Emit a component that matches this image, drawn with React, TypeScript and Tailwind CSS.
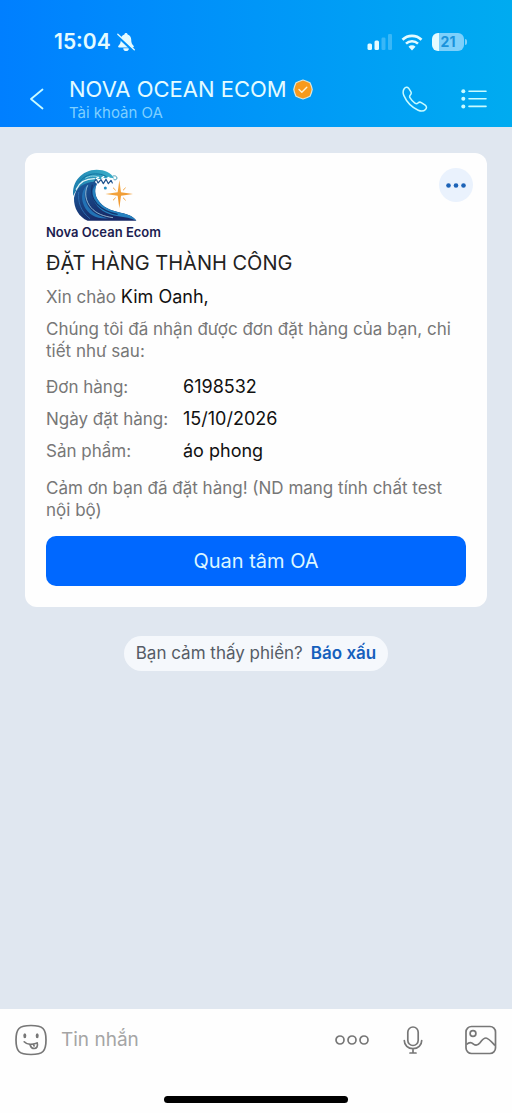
import { ReactNode } from "react";

const orderRows = [
  { label: "Đơn hàng:", value: "6198532" },
  { label: "Ngày đặt hàng:", value: "15/10/2026" },
  { label: "Sản phẩm:", value: "áo phong" },
];

interface IconButtonProps {
  label: string;
  className?: string;
  children: ReactNode;
}

const IconButton = ({ label, className = "", children }: IconButtonProps) => (
  <button type="button" aria-label={label} className={`shrink-0 cursor-pointer ${className}`}>
    {children}
  </button>
);

const BellOffIcon = () => (
  <svg width="18" height="20" viewBox="0 0 18 20" fill="none" aria-hidden="true">
    <path
      d="M9 1c-.9 0-1.500.600-1.600 1.400C5 3.200 3.800 5.200 3.800 7.600c0 3.200-.7 4.500-2.300 6.200-.7.8-.3 1.700.6 1.700h13.800c.9 0 1.300-.9.600-1.700-1.600-1.700-2.300-3-2.300-6.200 0-2.400-1.200-4.400-3.600-5.200C10.500 1.600 9.900 1 9 1Z"
      fill="#e4fbff"
    />
    <path d="M6.300 16.300a2.800 2.800 0 0 0 5.600 0Z" fill="#e4fbff" />
    <path d="M0 3.400 16.500 19" stroke="#0090fb" strokeWidth="2.600" />
    <path d="M.8 2.200 17.300 17.700" stroke="#e4fbff" strokeWidth="1.300" strokeLinecap="round" />
  </svg>
);

const SignalIcon = () => (
  <svg width="26" height="18" viewBox="0 0 26 18" fill="#e4fbff" aria-hidden="true">
    <rect x="0.500" y="10.500" width="4.500" height="6.500" rx="1.500" />
    <rect x="7.500" y="7.500" width="4.500" height="9.500" rx="1.500" />
    <rect x="14.500" y="4.500" width="4" height="12.500" rx="1.300" opacity="0.25" />
    <rect x="21" y="1" width="4" height="16" rx="1.300" opacity="0.25" />
  </svg>
);

const WifiIcon = () => (
  <svg width="22" height="17" viewBox="0 0 22 17" fill="none" aria-hidden="true">
    <path d="M1.500 5.800a13.600 13.600 0 0 1 19 0" stroke="#e4fbff" strokeWidth="2.700" />
    <path d="M5 9.700a8.600 8.600 0 0 1 12 0" stroke="#e4fbff" strokeWidth="2.500" />
    <path d="M11 16.500 7.500 12.800a5 5 0 0 1 7 0Z" fill="#e4fbff" />
  </svg>
);

const VerifiedIcon = () => (
  <svg width="20" height="21" viewBox="0 0 20 21" fill="none" aria-label="Đã xác thực">
    <path
      d="M10 1l3.500 1.200 3.500 1.500 1.400 3.500.8 3.300-.8 3.300-1.400 3.500-3.500 1.500L10 20l-3.500-1.200L3 17.300l-1.400-3.500-.8-3.300.8-3.300L3 3.700l3.500-1.500Z"
      fill="#f89a1c"
      stroke="#d9e6dc"
      strokeWidth="1.200"
      strokeLinejoin="round"
    />
    <path d="m6 10.500 2.800 2.700 5-5" stroke="#fff0cf" strokeWidth="1.400" strokeLinecap="round" strokeLinejoin="round" />
  </svg>
);

const PhoneIcon = () => (
  <svg width="26" height="26" viewBox="0 0 26 26" fill="none" stroke="#c8fbff" strokeWidth="1.500" strokeLinejoin="round" aria-hidden="true">
    <path d="M2.200 2.700C3.500 1 5.400.7 6.600 2.200l2.200 3.500c.8 1.300.5 2.300-.5 3.300-.9.9-.9 1.800-.2 2.900 1.100 1.800 2.900 3.900 4.800 5.200 1.200.8 2.200.8 3.100-.1 1-1 2-1.200 3.300-.4l3.900 2.600c1.500 1.100 1.700 2.800.3 4.200-1.800 1.900-4.700 2-7.300.8C9.900 21.300 4.700 16 1.900 9.600.8 7 .8 4.700 2.200 2.700Z" />
  </svg>
);

const ListIcon = () => (
  <svg width="26" height="20" viewBox="0 0 26 20" aria-hidden="true">
    <g fill="#c8fbff">
      <circle cx="2.300" cy="2.200" r="2" />
      <circle cx="2.300" cy="9.800" r="2" />
      <circle cx="2.300" cy="17.400" r="2" />
    </g>
    <path d="M8 2.200h17M8 9.800h17M8 17.400h17" stroke="#c8fbff" strokeWidth="1.600" strokeLinecap="round" />
  </svg>
);

const BrandMark = () => (
  <svg width="68" height="54" viewBox="34 20 204 162" fill="none" aria-hidden="true">
    <defs>
      <linearGradient id="deep" x1="60" y1="60" x2="120" y2="178" gradientUnits="userSpaceOnUse">
        <stop stopColor="#1c5d9f" />
        <stop offset="0.5" stopColor="#18407f" />
        <stop offset="1" stopColor="#182a68" />
      </linearGradient>
      <linearGradient id="crest" x1="50" y1="90" x2="150" y2="30" gradientUnits="userSpaceOnUse">
        <stop stopColor="#1d7fae" />
        <stop offset="1" stopColor="#38acc8" />
      </linearGradient>
      <linearGradient id="star" x1="140" y1="60" x2="205" y2="140" gradientUnits="userSpaceOnUse">
        <stop stopColor="#f6b352" />
        <stop offset="1" stopColor="#ee8f22" />
      </linearGradient>
    </defs>
    {/* wave body and tail */}
    <path d="M43 110c4-28 26-52 56-50 6 1 10 4 13 8-8 14-7 32 3 48 14 22 38 32 68 38 21 4 37 10 47 24H84c-26-10-42-38-41-68Z" fill="url(#deep)" />
    <path d="M112 68c-8 14-7 32 3 48 14 22 38 32 68 38 21 4 37 10 47 24-16-8-34-10-54-13-36-5-62-22-74-48-8-20-5-38 10-49Z" fill="#2581bf" />
    <path d="M88 68c-16 14-18 44-2 68 14 20 36 30 62 35-36 3-62-10-75-38-11-26-6-52 15-65Z" fill="#2272b5" />
    <path d="M84 72c-11 22-6 48 10 67 16 18 38 26 66 30" stroke="#b9e2f0" strokeWidth="2.200" />
    <path d="M98 70c-6 22 0 42 14 58 16 17 38 27 62 31" stroke="#14356f" strokeWidth="3.500" />
    <path d="M57 92c-3 30 6 58 34 80" stroke="#2b6aae" strokeWidth="3" />
    {/* curling crest */}
    <path d="M41 104c-6-42 26-79 70-79 24 0 44 9 53 27-8-4-16-4-22 0-6-3-14-3-18 2-8-4-16-1-18 7-32 1-56 17-65 43Z" fill="url(#crest)" />
    <path d="M50 84c9-20 27-32 54-32" stroke="#e6f6f8" strokeWidth="4" strokeLinecap="round" />
    <path d="M60 62c12-18 32-26 56-24 10 1 18 4 24 8" stroke="#12729f" strokeWidth="3" strokeLinecap="round" />
    <path d="M78 50c12-7 28-8 40-2" stroke="#8fd3e2" strokeWidth="3" strokeLinecap="round" />
    <path d="M102 63l8-9 5 11 9-10 7 12 8-13 7 13 8-10 4 8" stroke="#1a4f8a" strokeWidth="3.500" strokeLinejoin="round" strokeLinecap="round" />
    <path d="M110 52l6-4M126 50l6-4M142 51l6-3" stroke="#fff" strokeWidth="4" strokeLinecap="round" />
    <circle cx="137" cy="80" r="4.500" fill="#258fc0" />
    <path d="M160 44c7-2 12 1 12 6s-5 7-9 5" stroke="#2a8eaa" strokeWidth="2.500" strokeLinecap="round" />
    {/* compass star */}
    <path d="M179 56l5 37 36 5-36 5-5 38-5-38-37-5 37-5Z" fill="url(#star)" />
    <path d="M161 80l6 6M197 80l-6 6M161 116l6-6M197 116l-6-6" stroke="#f1a13a" strokeWidth="3" strokeLinecap="round" />
  </svg>
);

const StickerIcon = () => (
  <svg width="32" height="32" viewBox="0 0 32 32" fill="none" stroke="#777" strokeWidth="1.700" aria-hidden="true">
    <path d="M16 1.500c5 0 9.500.5 12 3s3 6.500 3 11.500-.5 9-3 11.500-7 3-12 3-9.500-.5-12-3-3-6.500-3-11.500.5-9 3-11.500 7-3 12-3Z" />
    <ellipse cx="9.800" cy="11.800" rx="1.500" ry="2.500" fill="#777" stroke="none" />
    <ellipse cx="22.200" cy="11.800" rx="1.500" ry="2.500" fill="#777" stroke="none" />
    <path d="M9.200 17.800c2.300 2.600 7.600 3 13 1.200" strokeLinecap="round" />
    <path d="M22.200 19c1 3.200-.6 5.500-3 5.500-1.900 0-3.200-1-4-3.300M18.500 20.500l.6 1.400" strokeLinecap="round" />
  </svg>
);

const MoreIcon = () => (
  <svg width="36" height="12" viewBox="0 0 36 12" fill="none" stroke="#777" strokeWidth="1.700" aria-hidden="true">
    <circle cx="6" cy="6" r="4" />
    <circle cx="18" cy="6" r="4" />
    <circle cx="30" cy="6" r="4" />
  </svg>
);

const MicIcon = () => (
  <svg width="20" height="28" viewBox="0 0 20 28" fill="none" stroke="#777" strokeWidth="1.700" strokeLinecap="round" aria-hidden="true">
    <rect x="4.800" y="1" width="10.400" height="18.500" rx="5.200" />
    <path d="M1.300 14.500c0 4.800 3.700 8.200 8.700 8.200s8.700-3.400 8.700-8.200M10 22.700V27M7 27h6" />
  </svg>
);

const PhotoIcon = () => (
  <svg width="32" height="30" viewBox="0 0 32 30" fill="none" stroke="#777" strokeWidth="1.700" aria-hidden="true">
    <rect x="1" y="1.500" width="29.500" height="27" rx="5.500" />
    <circle cx="8" cy="8.500" r="2.900" />
    <path d="M1.500 19.500c2.500-2.500 5-2.400 7-.4 2.300 1.700 4.400 1.300 6.500-1.400 2-2.700 4-4.700 6-4.700 2.300 0 4.400 2.500 9 7.500" />
  </svg>
);

const ChatHeader = () => (
  <header className="bg-linear-to-r from-[#007fff] to-[#00abf0] pt-7 pb-1 text-[#e4fbff]">
    <div className="flex h-7 items-center pr-[45px] pl-[54px]">
      <span className="text-[21px] leading-7 font-semibold">15:04</span>
      <span className="ml-1.5">
        <BellOffIcon />
      </span>
      <div className="ml-auto flex items-center gap-2">
        <SignalIcon />
        <WifiIcon />
        <div className="ml-px flex items-center gap-px">
          <span className="flex h-[18px] w-8 items-center justify-center rounded-md bg-linear-to-r from-[#e4fbff] from-22% to-[#7dd0fb] to-22% text-sm leading-none font-bold text-[#1a93dc]">
            21
          </span>
          <span className="h-1.5 w-0.5 rounded-r-full bg-[#7dd0fb]" />
        </div>
      </div>
    </div>

    <div className="mt-[19px] flex items-center pr-[25px] pl-[29px]">
      <IconButton label="Quay lại">
        <svg width="15" height="22" viewBox="0 0 15 22" fill="none" aria-hidden="true">
          <path d="M13.500 1.500 2 11l11.500 9.500" stroke="#c8fbff" strokeWidth="1.800" strokeLinecap="round" strokeLinejoin="round" />
        </svg>
      </IconButton>
      <div className="ml-[25px] min-w-0 flex-1">
        <div className="flex items-center gap-1.5">
          <h1 className="truncate text-[22px] leading-7">NOVA OCEAN ECOM</h1>
          <VerifiedIcon />
        </div>
        <p className="text-[15px] leading-5 text-[#7fd0ff]">Tài khoản OA</p>
      </div>
      <IconButton label="Gọi điện">
        <PhoneIcon />
      </IconButton>
      <IconButton label="Tùy chọn" className="ml-[33px]">
        <ListIcon />
      </IconButton>
    </div>
  </header>
);

const OrderCard = () => (
  <article className="rounded-xl bg-[#fefefe] pt-[15px] pb-[21px]">
    <div className="flex items-start justify-between pr-3.5 pl-[21px]">
      <div className="flex flex-col items-center">
        <div className="pl-1">
          <BrandMark />
        </div>
        <p className="mt-0.5 text-[13px] leading-4 font-semibold text-[#1c1d50]">Nova Ocean Ecom</p>
      </div>
      <IconButton label="Thêm" className="flex size-[34px] items-center justify-center rounded-full bg-[#eaf2fd]">
        <svg width="20" height="5" viewBox="0 0 20 5" fill="#1c63b7" aria-hidden="true">
          <circle cx="2.500" cy="2.500" r="2.300" />
          <circle cx="10" cy="2.500" r="2.300" />
          <circle cx="17.500" cy="2.500" r="2.300" />
        </svg>
      </IconButton>
    </div>

    <div className="px-[21px] text-[17px] leading-[22px] text-[#777]">
      <h2 className="mt-2.5 text-xl leading-[26px] text-[#222]">ĐẶT HÀNG THÀNH CÔNG</h2>
      <p className="mt-2.5">
        Xin chào <span className="text-lg leading-[22px] text-[#111]">Kim Oanh,</span>
      </p>
      <p className="mt-2.5">Chúng tôi đã nhận được đơn đặt hàng của bạn, chi tiết như sau:</p>
      <dl className="mt-3.5 grid grid-cols-[137px_1fr] gap-y-2.5">
        {orderRows.map((row) => (
          <div key={row.label} className="contents">
            <dt>{row.label}</dt>
            <dd className="text-lg leading-[22px] text-[#111]">{row.value}</dd>
          </div>
        ))}
      </dl>
      <p className="mt-[15px]">Cảm ơn bạn đã đặt hàng! (ND mang tính chất test nội bộ)</p>
      <button type="button" className="mt-[15px] h-[50px] w-full cursor-pointer rounded-[10px] bg-[#0068ff] text-xl text-[#dcf6ff]">
        Quan tâm OA
      </button>
    </div>
  </article>
);

const MessageBar = () => (
  <footer className="bg-[#fefefe] pb-2.5">
    <div className="flex h-[62px] items-center px-[15px]">
      <IconButton label="Nhãn dán">
        <StickerIcon />
      </IconButton>
      <input
        type="text"
        aria-label="Tin nhắn"
        placeholder="Tin nhắn"
        className="ml-3.5 min-w-0 flex-1 text-[19px] text-[#333] outline-none placeholder:text-[#a5a5a5]"
      />
      <IconButton label="Khác">
        <MoreIcon />
      </IconButton>
      <IconButton label="Ghi âm" className="ml-[33px]">
        <MicIcon />
      </IconButton>
      <IconButton label="Gửi ảnh" className="ml-[42px]">
        <PhotoIcon />
      </IconButton>
    </div>
    <div className="mx-auto mt-[25px] h-[7px] w-[184px] rounded-full bg-black" />
  </footer>
);

const App = () => (
  <div className="flex min-h-screen flex-col bg-[#e0e7f0] font-['Inter','Liberation_Sans',sans-serif] [&_svg]:block">
    <ChatHeader />
    <main className="flex-1 px-[25px] pt-[26px] pb-6">
      <OrderCard />
      <div className="mx-auto mt-[29px] flex h-[35px] w-fit items-center gap-2 rounded-full bg-[#f5f8fc] px-3 text-[17px] text-[#555c66]">
        <span>Bạn cảm thấy phiền?</span>
        <a href="#bao-xau" className="font-semibold text-[#1560bd]">
          Báo xấu
        </a>
      </div>
    </main>
    <MessageBar />
  </div>
);

export default App;
